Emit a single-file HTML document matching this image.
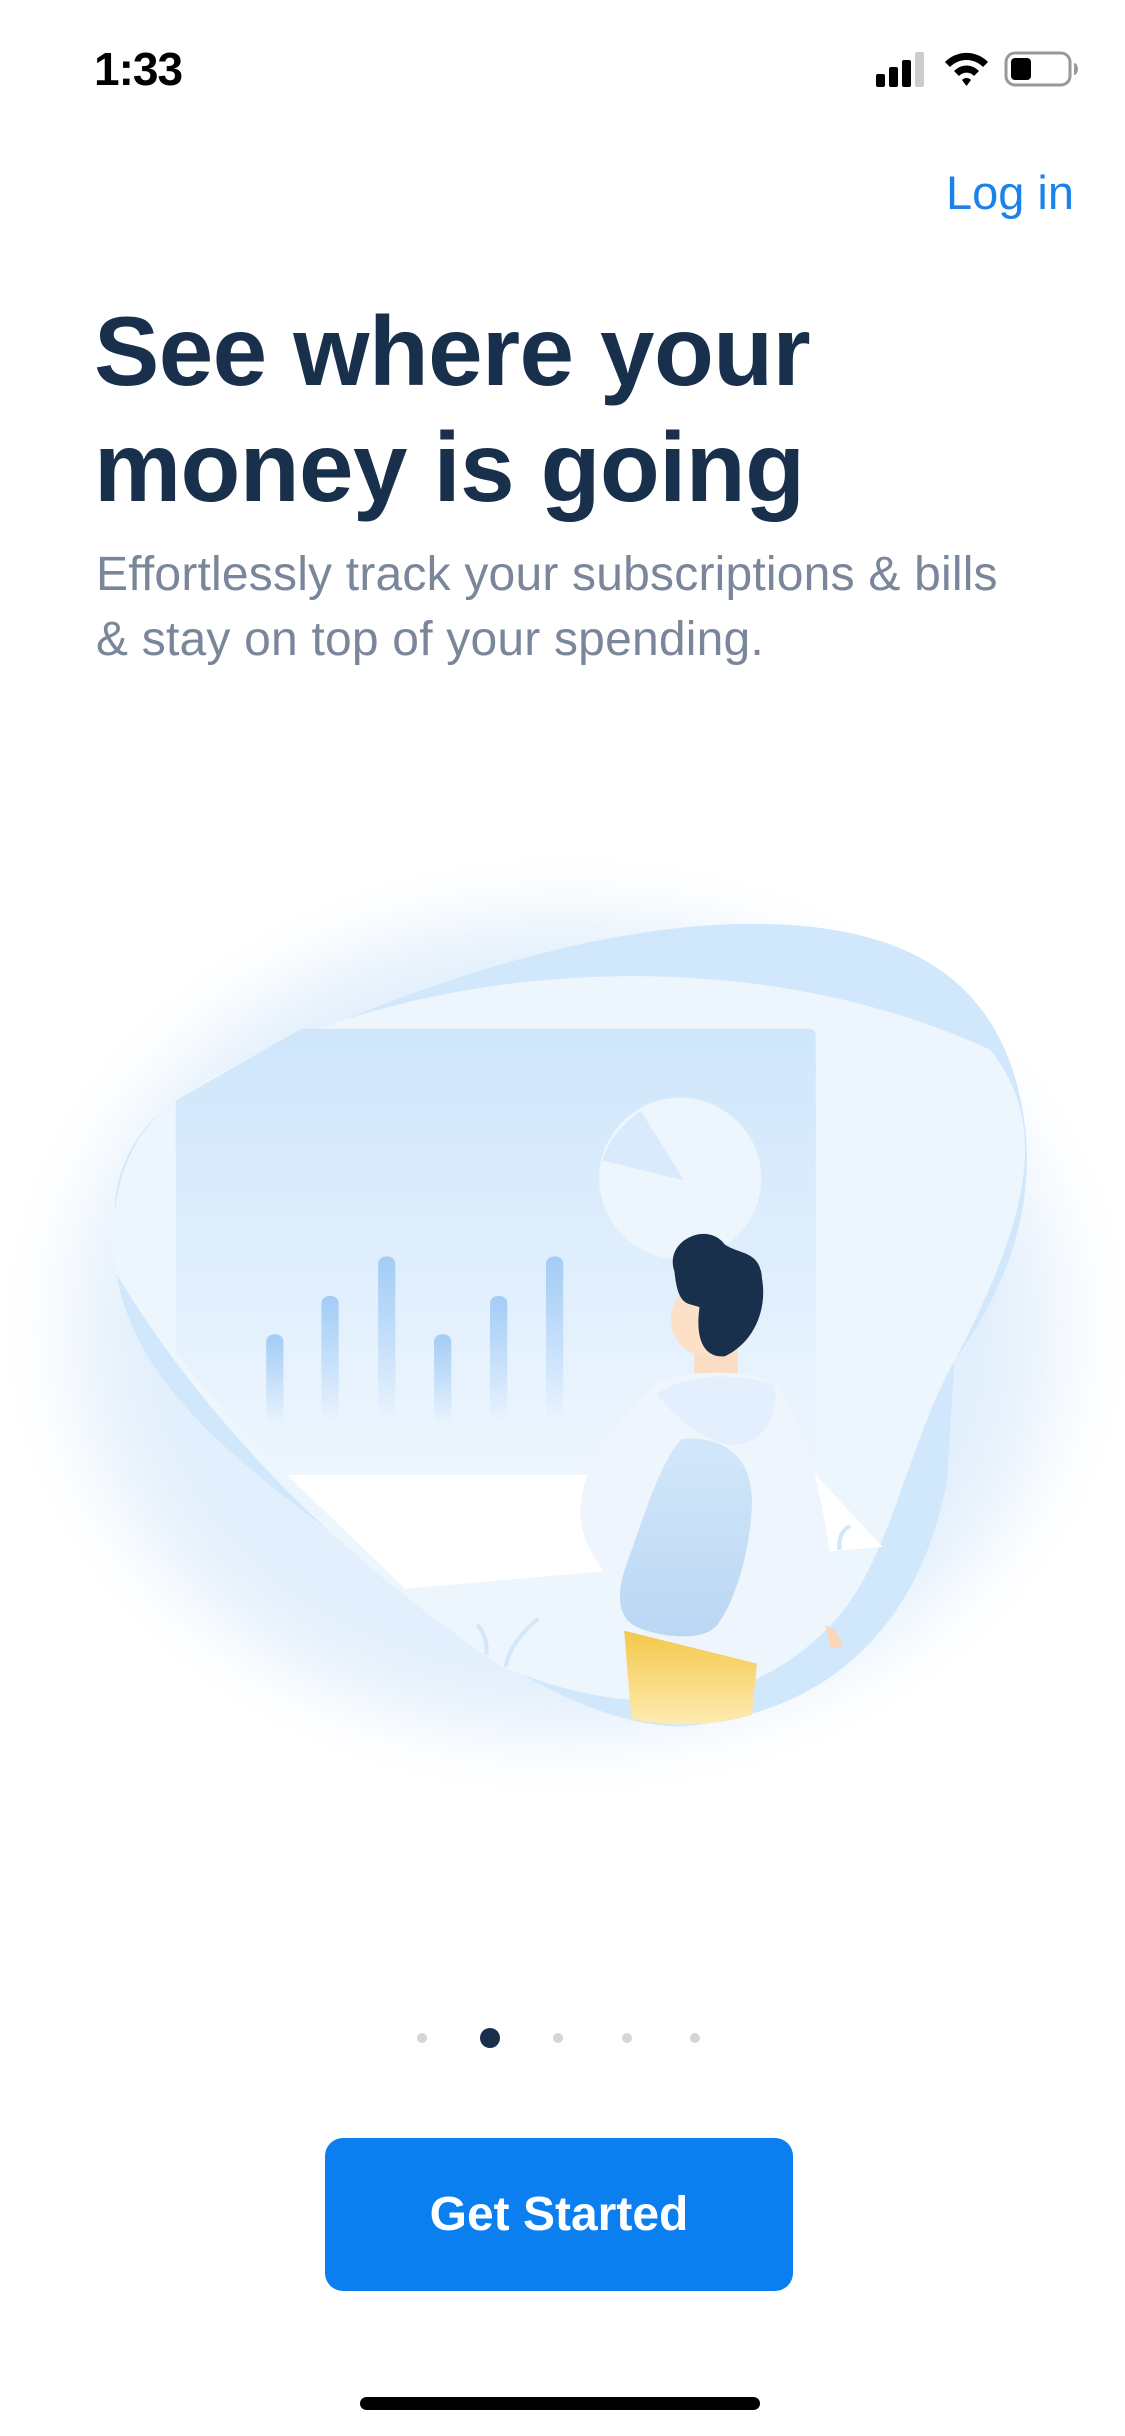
<!DOCTYPE html>
<html><head><meta charset="utf-8"><style>
*{margin:0;padding:0;box-sizing:border-box}
body{width:1125px;height:2436px;background:#fff;position:relative;overflow:hidden;font-family:"Liberation Sans",Arial,sans-serif}
.abs{position:absolute}
#time{left:94px;top:42px;font-size:46px;font-weight:bold;color:#000;letter-spacing:-1px}
#login{right:51px;top:165px;font-size:47px;color:#1a82e8}
#title{left:94px;top:293px;font-size:98px;font-weight:bold;color:#18304c;line-height:116px;letter-spacing:-0.6px}
#sub{left:96px;top:542px;font-size:48px;color:#7a8699;line-height:65px;letter-spacing:0.2px}
#btn{left:325px;top:2138px;width:468px;height:153px;background:#0b7ff0;border-radius:18px;color:#fff;font-weight:bold;font-size:48px;text-align:center;line-height:153px}
#home{left:360px;top:2397px;width:400px;height:13px;border-radius:7px;background:#000}
.dot{position:absolute;border-radius:50%;background:#d2d5da;width:10px;height:10px;top:2033px}
</style></head><body>
<div class="abs" id="time">1:33</div>
<svg class="abs" style="left:870px;top:48px" width="210" height="44" viewBox="0 0 210 44">
<rect x="6" y="26" width="9" height="13" rx="2" fill="#000"/>
<rect x="19" y="19" width="9" height="20" rx="2" fill="#000"/>
<rect x="32" y="12" width="9" height="27" rx="2" fill="#000"/>
<rect x="45" y="4" width="9" height="35" rx="2" fill="#ccc"/>
<path d="M75 14 A30 30 0 0 1 118 14 L113 19 A23 23 0 0 0 80 19Z M84 23 A17 17 0 0 1 109 23 L104 28 A10 10 0 0 0 89 28Z M92 32 L96.5 38 L101 32 A6 6 0 0 0 92 32Z" fill="#000"/>
<rect x="136" y="5" width="64" height="32" rx="9" fill="none" stroke="#999" stroke-width="3"/>
<rect x="141" y="10" width="20" height="22" rx="4" fill="#000"/>
<path d="M204 15 a4 6 0 0 1 0 12z" fill="#999"/>
</svg>
<div class="abs" id="login">Log in</div>
<div class="abs" id="title">See where your<br>money is going</div>
<div class="abs" id="sub">Effortlessly track your subscriptions &amp; bills<br>&amp; stay on top of your spending.</div>

<svg class="abs" style="left:0;top:852px" width="1125" height="950" viewBox="0 0 1568 1586" preserveAspectRatio="none">
<defs>
<filter id="bl" x="-30%" y="-30%" width="160%" height="160%"><feGaussianBlur stdDeviation="60"/></filter>
<linearGradient id="bd" x1="0" y1="0" x2="0" y2="1"><stop offset="0" stop-color="#cfe6fb"/><stop offset="1" stop-color="#eef6fe"/></linearGradient>
<linearGradient id="bar" x1="0" y1="0" x2="0" y2="1"><stop offset="0" stop-color="#a3ccf6"/><stop offset="1" stop-color="#a3ccf6" stop-opacity="0"/></linearGradient>
<linearGradient id="pt" x1="0" y1="0" x2="0" y2="1"><stop offset="0" stop-color="#f4c74a"/><stop offset="1" stop-color="#fdebb0"/></linearGradient>
<linearGradient id="bp" x1="0" y1="0" x2="0" y2="1"><stop offset="0" stop-color="#d3e7fa"/><stop offset="1" stop-color="#bad7f4"/></linearGradient>
</defs>
<ellipse cx="790" cy="790" rx="680" ry="680" fill="#e2effc" filter="url(#bl)"/>
<path d="M160,600 C140,850 300,1000 560,1220 C700,1380 850,1460 950,1460 C1150,1440 1280,1300 1320,1050 L1330,850 C1420,700 1450,550 1420,400 C1380,200 1250,120 1050,120 C800,120 500,250 245,415 C190,460 160,530 160,600 Z" fill="#d1e7fb"/>
<path d="M245,415 C500,200 1000,120 1380,330 C1460,450 1440,600 1330,850 C1260,1000 1240,1200 1150,1300 C1050,1420 900,1460 700,1360 C500,1200 300,980 160,700 C150,560 180,470 245,415 Z" fill="#edf5fd"/>
<path d="M245,415 L420,295 L1125,295 Q1137,295 1137,307 L1137,1040 L400,1040 Q300,920 245,835Z" fill="url(#bd)"/>
<path d="M400,1040 L1137,1040 L1230,1160 L565,1230 Z" fill="#fff"/>
<ellipse cx="948" cy="545" rx="113" ry="135" fill="#eef6fd"/>
<path d="M953,548 L893,432 Q850,470 840,515 Z" fill="#d8eafb"/>
<g fill="url(#bar)">
<rect x="371" y="805" width="24" height="150" rx="12"/>
<rect x="448" y="741" width="24" height="210" rx="12"/>
<rect x="527" y="675" width="24" height="275" rx="12"/>
<rect x="605" y="805" width="24" height="150" rx="12"/>
<rect x="683" y="741" width="24" height="210" rx="12"/>
<rect x="761" y="675" width="24" height="275" rx="12"/>
</g>
<rect x="968" y="800" width="60" height="90" fill="#fcdcc2"/>
<ellipse cx="985" cy="780" rx="50" ry="62" fill="#fde0c8"/>
<path d="M940,700 C925,650 985,615 1010,655 C1030,672 1060,665 1062,712 C1070,765 1050,820 1010,842 C975,845 970,800 975,760 C958,752 945,760 940,700Z" fill="#18304c"/>
<path d="M920,880 C1000,860 1060,870 1080,890 C1130,950 1160,1150 1165,1280 L1150,1290 C1110,1320 1070,1360 1020,1365 L870,1300 C860,1200 820,1190 810,1120 C800,1030 870,930 920,880Z" fill="#eef5fd"/>
<path d="M915,905 C960,970 1000,990 1025,990 C1070,985 1085,930 1080,890 C1030,870 960,868 915,905Z" fill="#e3effc"/>
<path d="M950,980 C1000,975 1050,1000 1048,1090 C1045,1180 1020,1260 1000,1290 C980,1320 920,1310 890,1295 C860,1280 860,1240 870,1200 C900,1100 920,1020 950,980Z" fill="url(#bp)"/>
<path d="M870,1300 L1055,1355 L1048,1440 C1000,1460 930,1460 880,1448 Z" fill="url(#pt)"/>
<path d="M1150,1290 L1165,1300 L1175,1325 L1158,1330Z" fill="#fcd6b8"/>
<path d="M665,1290 Q680,1310 678,1340 M750,1280 Q710,1320 705,1360 M1185,1125 Q1168,1135 1170,1165" stroke="#d3e7fb" stroke-width="6" fill="none"/>
</svg>

<div class="dot" style="left:417px"></div>
<div class="dot" style="left:480px;top:2028px;width:20px;height:20px;background:#18304c"></div>
<div class="dot" style="left:553px"></div>
<div class="dot" style="left:622px"></div>
<div class="dot" style="left:690px"></div>
<div class="abs" id="btn">Get Started</div>
<div class="abs" id="home"></div>
</body></html>
